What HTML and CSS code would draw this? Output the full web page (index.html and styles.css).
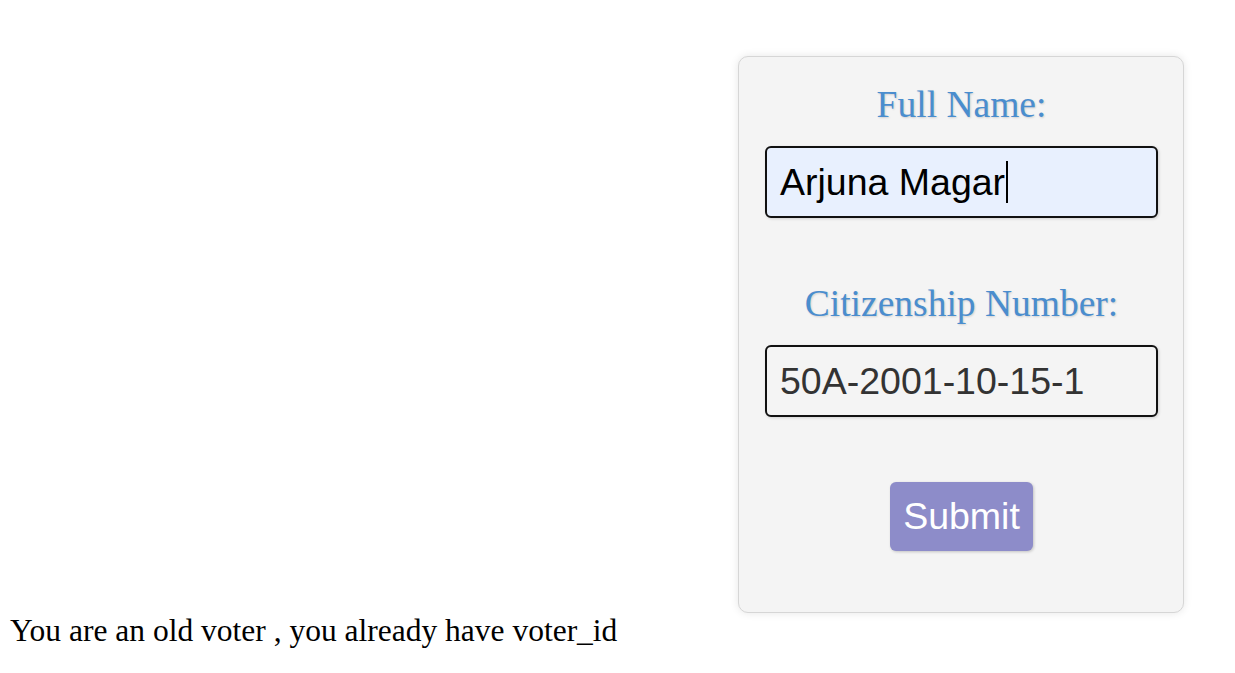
FILE: index.html
```html
<!DOCTYPE html>
<html>
<head>
<meta charset="utf-8">
<link rel="stylesheet" href="styles.css">
</head>
<body>
<div class="page">
  <form class="card">
    <label class="label" for="name">Full Name:</label>
    <div class="field autofill"><span class="value">Arjuna Magar</span><span class="caret"></span></div>
    <label class="label second" for="cit">Citizenship Number:</label>
    <div class="field"><span class="value gray">50A-2001-10-15-1</span></div>
    <div class="actions"><button type="button" class="submit">Submit</button></div>
  </form>
</div>
<p class="message">You are an old voter , you already have voter_id</p>
</body>
</html>
```

FILE: styles.css
```css
body {
  margin: 8px;
  font-family: "Liberation Serif", "Times New Roman", serif;
  background: #fff;
}
.page {
  display: flex;
  justify-content: flex-end;
  padding-top: 48px;
  padding-right: 43px;
}
.card {
  width: 393px;
  padding: 26px 25px 61px 26px;
  background: #f4f4f4;
  border: 1px solid #d6d6d6;
  border-radius: 10px;
  box-shadow: 0 0 8px rgba(0, 0, 0, 0.1);
  display: flex;
  flex-direction: column;
}
.label {
  font-size: 37.5px;
  line-height: 43px;
  color: #4a8dce;
  text-align: center;
  text-shadow: 1px 1px 2px rgba(0, 0, 0, 0.15);
  margin-bottom: 20px;
}
.second {
  margin-top: 64px;
}
.field {
  height: 44px;
  padding: 12px 13px;
  border: 2px solid #111;
  border-radius: 6px;
  background: #f4f4f4;
  box-shadow: 1px 1px 3px rgba(0, 0, 0, 0.15);
  font-family: "Liberation Sans", Arial, sans-serif;
  font-size: 37.5px;
  line-height: 43px;
  display: flex;
  align-items: center;
}
.autofill {
  background: #e8f0fe;
  color: #000;
}
.caret {
  display: inline-block;
  width: 2px;
  height: 42px;
  background: #000;
  margin-left: 1px;
}
.gray {
  color: #333;
}
.actions {
  display: flex;
  justify-content: center;
  margin-top: 65px;
}
.submit {
  font-family: "Liberation Sans", Arial, sans-serif;
  font-size: 37.5px;
  line-height: 43px;
  color: #fff;
  background: #8d8cc9;
  border: none;
  border-radius: 6px;
  padding: 13px 13px;
  box-shadow: 1px 1px 3px rgba(0, 0, 0, 0.2);
}
.message {
  margin: 0;
  padding-left: 2px;
  font-size: 31.5px;
  line-height: 36px;
  color: #000;
}
```
